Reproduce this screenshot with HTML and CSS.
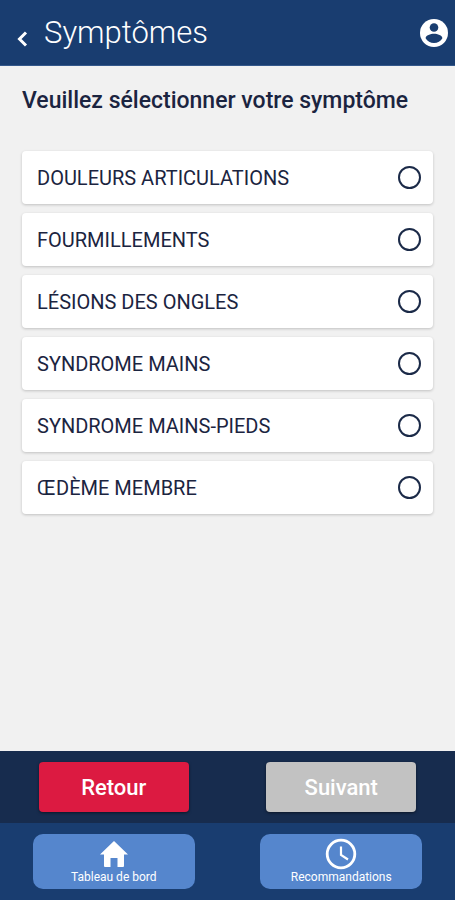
FILE: index.html
```html
<!DOCTYPE html>
<html lang="fr">
<head>
<meta charset="utf-8">
<meta name="viewport" content="width=device-width, initial-scale=1">
<title>Symptômes</title>
<link rel="stylesheet" href="styles.css">
</head>
<body>
<header class="topbar">
  <button class="icon-button back" type="button" aria-label="Précédent">
    <svg width="12" height="16" viewBox="0 0 12 16" fill="none" stroke="currentColor" stroke-width="3"><path d="M10 1.500 3.500 8l6.500 6.500"/></svg>
  </button>
  <h1 class="title">Symptômes</h1>
  <button class="icon-button account" type="button" aria-label="Compte">
    <svg width="28" height="28" viewBox="0 0 28 28"><circle cx="14" cy="14" r="14" fill="currentColor"/><circle class="cutout" cx="14" cy="8.500" r="4.300"/><path class="cutout" d="M5.600 19.200c0-2.800 5-4.500 8.400-4.500s8.400 1.700 8.400 4.500c-1.700 2.700-4.800 4.800-8.400 4.800s-6.700-2.100-8.400-4.800z"/></svg>
  </button>
</header>
<main class="content">
  <h2 class="prompt" id="prompt">Veuillez sélectionner votre symptôme</h2>
  <div class="options" role="radiogroup" aria-labelledby="prompt">
    <label class="option"><span>DOULEURS ARTICULATIONS</span><input class="radio" type="radio" name="symptom"></label>
    <label class="option"><span>FOURMILLEMENTS</span><input class="radio" type="radio" name="symptom"></label>
    <label class="option"><span>LÉSIONS DES ONGLES</span><input class="radio" type="radio" name="symptom"></label>
    <label class="option"><span>SYNDROME MAINS</span><input class="radio" type="radio" name="symptom"></label>
    <label class="option"><span>SYNDROME MAINS-PIEDS</span><input class="radio" type="radio" name="symptom"></label>
    <label class="option"><span>ŒDÈME MEMBRE</span><input class="radio" type="radio" name="symptom"></label>
  </div>
</main>
<footer>
  <div class="actions">
    <div class="cell"><button class="action primary" type="button">Retour</button></div>
    <div class="cell"><button class="action" type="button" disabled>Suivant</button></div>
  </div>
  <nav class="tabs">
    <div class="cell"><a class="tab" href="#tableau">
      <svg width="32" height="32" viewBox="0 0 32 32" fill="currentColor"><path d="M16 3 2 16.500h4V28q0 1 1 1h5.500v-9h7v9H25q1 0 1-1V16.500h4z"/></svg>
      <span>Tableau de bord</span></a></div>
    <div class="cell"><a class="tab" href="#recommandations">
      <svg width="32" height="32" viewBox="0 0 32 32" fill="none" stroke="currentColor"><circle cx="16" cy="16" r="13.800" stroke-width="2.800"/><path d="M16 8.500v8.500l7 4.500" stroke-width="2.200"/></svg>
      <span>Recommandations</span></a></div>
  </nav>
</footer>
</body>
</html>
```
FILE: styles.css
```css
* { box-sizing: border-box; }

body {
  margin: 0;
  min-height: 100vh;
  display: flex;
  flex-direction: column;
  background: #f1f1f1;
  color: #1b2440;
  font-family: Roboto, "Liberation Sans", sans-serif;
}

.topbar {
  display: flex;
  align-items: center;
  height: 66px;
  padding: 0 7px 0 16px;
  background: #193d70;
  color: #fff;
  border-bottom: 1px solid #34588b;
}

.icon-button {
  display: flex;
  padding: 0;
  border: 0;
  background: none;
  color: inherit;
}

.back { padding-top: 12px; }

.title {
  flex: 1;
  margin: 0 0 0 16px;
  font-size: 31px;
  line-height: 40px;
  font-weight: 300;
}

.cutout { fill: #193d70; }

.content {
  flex: 1;
  padding: 20px 22px;
}

.prompt {
  margin: 0 0 35px;
  font-size: 23px;
  line-height: 30px;
  font-weight: 500;
}

.options {
  display: grid;
  gap: 9px;
}

.option {
  display: flex;
  align-items: center;
  justify-content: space-between;
  height: 53px;
  padding: 0 12px 0 15px;
  border-radius: 4px;
  background: #fff;
  box-shadow: 0 1px 3px rgba(0, 0, 0, 0.2);
  font-size: 20px;
  line-height: 24px;
}

.radio {
  appearance: none;
  width: 23px;
  height: 23px;
  margin: 0;
  border: 2px solid #1b2a48;
  border-radius: 50%;
}

.radio:checked { box-shadow: inset 0 0 0 4px #fff; background: #1b2a48; }

.actions,
.tabs {
  display: grid;
  grid-template-columns: 1fr 1fr;
}

.actions {
  padding: 11px 0;
  background: #172c4e;
}

.tabs {
  padding: 11px 0;
  background: #193d70;
}

.cell {
  display: flex;
  justify-content: center;
}

.action {
  width: 66%;
  height: 50px;
  border: 0;
  border-radius: 4px;
  background: #c2c2c2;
  color: #fff;
  box-shadow: 0 1px 3px rgba(0, 0, 0, 0.5);
  font-family: inherit;
  font-size: 22px;
  font-weight: 500;
}

.primary { background: #dc1a41; }

.tab {
  display: flex;
  flex-direction: column;
  align-items: center;
  width: 71%;
  height: 55px;
  padding-top: 4px;
  border-radius: 10px;
  background: #5586cd;
  color: #fff;
  font-size: 12px;
  line-height: 14px;
  text-decoration: none;
}
```
